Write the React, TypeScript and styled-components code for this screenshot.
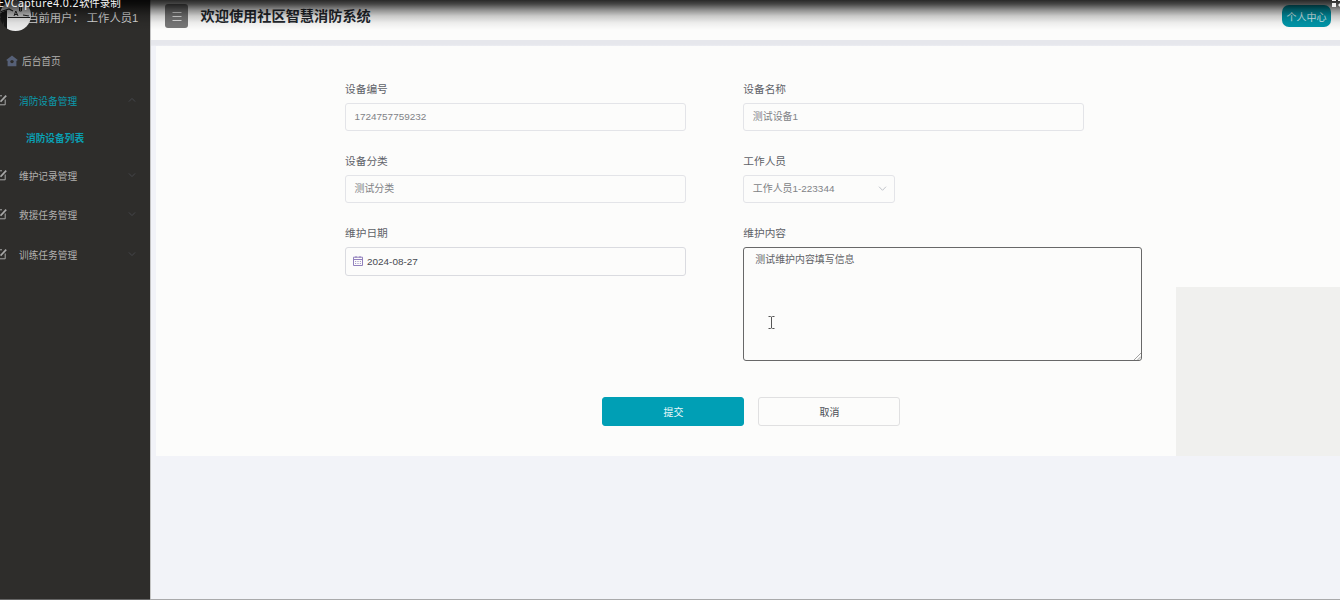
import React from "react";
import styled, { createGlobalStyle, css } from "styled-components";

const GlobalStyle = createGlobalStyle`
  * { box-sizing: border-box; }
  html, body { margin: 0; padding: 0; }
  body {
    width: 1340px;
    height: 600px;
    overflow: hidden;
    font-family: "Liberation Sans", "Noto Sans CJK SC", sans-serif;
    font-size: 10px;
    color: #5c5f66;
  }
`;

const Page = styled.div`
  position: relative;
  display: flex;
  width: 1340px;
  height: 600px;
  overflow: hidden;
  background: #f2f3f8;
`;

const Sidebar = styled.aside`
  flex: none;
  width: 151px;
  height: 600px;
  background: #2e2d2b;
  border-right: 1px solid #c4c4c4;
  overflow: hidden;
`;

const UserRow = styled.div`
  display: flex;
  height: 41px;
  color: #dcdcdc;
  font-size: 11.3px;
  line-height: 16px;
  white-space: pre;
`;

const Avatar = styled.svg`
  flex: none;
  width: 32px;
  height: 32px;
`;

const UserName = styled.span`
  margin: 9.5px 0 0 -4.8px;
`;

const MenuItem = styled.div<{ $active?: boolean }>`
  display: flex;
  align-items: center;
  height: 39.7px;
  padding: 0 14px 0 0;
  font-size: 9.7px;
  color: ${(p) => (p.$active ? "#0a9bad" : "#b2b1af")};
`;

const HomeItem = styled(MenuItem)`
  padding-left: 6px;
  gap: 4px;
`;

const SubItem = styled.div`
  display: flex;
  align-items: center;
  height: 35.5px;
  padding-left: 26px;
  font-size: 9.7px;
  font-weight: 700;
  color: #0a9fb2;
`;

const EditIcon = styled.svg`
  flex: none;
  width: 12px;
  height: 12px;
  margin: 0 12px 2px -5px;
  fill: none;
  stroke: #a9a9a9;
`;

const MenuLabel = styled.span`
  flex: 1;
`;

const Chevron = styled.svg<{ $up?: boolean }>`
  flex: none;
  width: 8px;
  height: 6px;
  fill: none;
  stroke: currentColor;
  color: #484b50;
  transform: translateY(-1px) ${(p) => (p.$up ? "rotate(180deg)" : "")};
`;

const SelectChevron = styled(Chevron)`
  color: #c0c3c9;
  width: 9px;
  height: 7px;
  transform: none;
`;

const Main = styled.main`
  flex: 1;
  display: flex;
  flex-direction: column;
  min-width: 0;
`;

const Header = styled.header`
  flex: none;
  display: flex;
  align-items: flex-start;
  height: 40px;
  padding: 4px 9px 0 14px;
  background: #fcfcfb;
`;

const MenuButton = styled.button`
  display: flex;
  align-items: center;
  justify-content: center;
  width: 23px;
  height: 24px;
  padding: 0;
  border: 0;
  border-radius: 3px;
  background: #777;
`;

const Title = styled.h1`
  flex: 1;
  margin: 2px 0 0 12.5px;
  font-size: 14.2px;
  line-height: 20px;
  font-weight: 700;
  color: #23272d;
`;

const ProfileButton = styled.button`
  width: 49px;
  height: 22px;
  margin-top: 1px;
  padding: 0;
  border: 0;
  border-radius: 7px;
  background: #0097aa;
  color: #d8f2f4;
  font: inherit;
  font-size: 10px;
  white-space: nowrap;
`;

const HeaderShade = styled.div`
  flex: none;
  height: 6px;
  background: linear-gradient(#e6e7ec 0 70%, #ecedf2);
`;

const Panel = styled.section`
  display: flex;
  flex: none;
  height: 410px;
  margin-left: 5px;
  background: #fcfcfb;
`;

const Form = styled.form`
  display: flex;
  flex-direction: column;
  width: 1020px;
  padding: 34.8px 0 0 189px;
`;

const Fields = styled.div`
  display: grid;
  grid-template-columns: 398.3px 398.5px;
  grid-template-rows: 72.2px 72.2px 172.2px;
`;

const Field = styled.div`
  display: flex;
  flex-direction: column;
`;

const Label = styled.label`
  height: 22px;
  font-size: 10.7px;
  line-height: 16px;
  color: #5e6168;
`;

const box = css`
  display: flex;
  align-items: center;
  height: 28.4px;
  padding-bottom: 0.5px;
  border: 1px solid #e3e4e8;
  border-radius: 3px;
  font-size: 9.94px;
  line-height: 15px;
  color: #808286;
`;

const Input = styled.div`
  ${box}
  width: 341px;
  padding-left: 8.5px;
`;

const DateInput = styled(Input)`
  gap: 4px;
  padding-left: 7px;
  padding-bottom: 0;
  border-color: #dadbe0;
  color: #464950;
`;

const Select = styled.div`
  ${box}
  justify-content: space-between;
  width: 152px;
  padding-left: 8.5px;
  padding-right: 7.5px;
`;

const TextArea = styled.textarea`
  display: block;
  width: 100%;
  height: 114px;
  padding: 4px 11px;
  border: 1.4px solid #686868;
  border-radius: 3px;
  outline: none;
  resize: none;
  background: transparent;
  font: inherit;
  font-size: 9.94px;
  line-height: 15px;
  color: #606266;
`;

const TextAreaWrap = styled.div`
  position: relative;
  width: 398.5px;
  height: 114px;
`;

const Grip = styled.svg`
  position: absolute;
  right: 1px;
  bottom: 1px;
  width: 7px;
  height: 7px;
  stroke: #8a8a8a;
  stroke-width: 0.8;
`;

const TextCursor = styled.svg`
  position: absolute;
  left: 25px;
  top: 69px;
  width: 7px;
  height: 13px;
  fill: none;
  stroke: #555;
`;

const Actions = styled.div`
  display: flex;
  gap: 14px;
  margin-left: 257.4px;
`;

const Button = styled.button<{ $primary?: boolean }>`
  width: 142px;
  height: 28.5px;
  padding: 0;
  border: 1px solid ${(p) => (p.$primary ? "#009fb5" : "#e0e0e1")};
  border-radius: 3px;
  background: ${(p) => (p.$primary ? "#009fb5" : "#fcfcfb")};
  color: ${(p) => (p.$primary ? "#e8f8fa" : "#4b4e55")};
  font: inherit;
  font-size: 9.94px;
`;

const Aside = styled.div`
  flex: 1;
  align-self: flex-end;
  height: 169px;
  background: #f0f0ee;
`;

const TopFade = styled.div`
  position: absolute;
  inset: 0 0 auto 0;
  height: 30px;
  pointer-events: none;
  background: linear-gradient(
    rgba(0, 0, 0, 0.84) 0,
    rgba(0, 0, 0, 0.72) 4px,
    rgba(0, 0, 0, 0.43) 10px,
    rgba(0, 0, 0, 0.2) 16px,
    rgba(0, 0, 0, 0.06) 23px,
    rgba(0, 0, 0, 0) 30px
  );
`;

const Watermark = styled.div`
  position: absolute;
  left: -2px;
  top: -5px;
  font-family: "Noto Sans", "Noto Sans CJK SC", sans-serif;
  font-size: 10.5px;
  line-height: 16px;
  color: #f4f4f4;
  white-space: nowrap;
`;

const Version = styled.span`
  letter-spacing: 0.42px;
`;

const CornerIcon = styled.svg`
  position: absolute;
  right: 0;
  top: 0;
  width: 9px;
  height: 8px;
  fill: #f1f1f1;
`;

const BottomEdge = styled.div`
  position: absolute;
  inset: auto 0 0 0;
  height: 1px;
  background: #a9a9ab;
`;

const BottomEdgeDark = styled(BottomEdge)`
  right: auto;
  width: 150px;
  background: #666;
`;

const managementMenus = ["维护记录管理", "救援任务管理", "训练任务管理"];

function ChevronPath() {
  return <path d="M1 1.2 4.5 4.8 8 1.2" />;
}

function Edit() {
  return (
    <EditIcon viewBox="0 0 12 12">
      <path d="M7 1.8H1.2v9h9V5.5" />
      <path d="M5.5 7.6 11.2 1.6" strokeWidth="1.7" />
    </EditIcon>
  );
}

export default function App() {
  return (
    <Page>
      <GlobalStyle />
      <Sidebar>
        <UserRow>
          <Avatar viewBox="0 0 32 32">
            <defs>
              <clipPath id="avatar">
                <circle cx="15.5" cy="15.5" r="15.5" />
              </clipPath>
            </defs>
            <g clipPath="url(#avatar)">
              <path fill="#d0d0d0" d="M0 0h32v18H0z" />
              <path fill="#ededed" d="M7 18h25v14H7z" />
              <path fill="#171717" d="M0 13 7 10v22H4V21l-2 5H0z" />
              <path d="M0 12 9 9 13 11M8 17.5h22M23 15l6 1" stroke="#222" strokeWidth="1.2" fill="none" />
              <path d="M14 16l1.8-5 2.2 5M14.6 14.5h2.8M19.5 7h2v4h-2zM19.5 9h2" stroke="#222" strokeWidth="1" fill="none" />
            </g>
          </Avatar>
          <UserName>当前用户： 工作人员1</UserName>
        </UserRow>
        <HomeItem>
          <svg width="12" height="12" viewBox="0 0 12 12">
            <path fill="#566077" d="M6 .5 11.8 5 10.4 6v5.2H1.6V6L.2 5z" />
            <circle cx="6" cy="6.6" r="1.7" fill="#2e2d2b" />
          </svg>
          后台首页
        </HomeItem>
        <MenuItem $active>
          <Edit />
          <MenuLabel>消防设备管理</MenuLabel>
          <Chevron $up viewBox="0 0 9 6"><ChevronPath /></Chevron>
        </MenuItem>
        <SubItem>消防设备列表</SubItem>
        {managementMenus.map((name) => (
          <MenuItem key={name}>
            <Edit />
            <MenuLabel>{name}</MenuLabel>
            <Chevron viewBox="0 0 9 6"><ChevronPath /></Chevron>
          </MenuItem>
        ))}
      </Sidebar>
      <Main>
        <Header>
          <MenuButton type="button">
            <svg width="10" height="10" viewBox="0 0 10 10" stroke="#e4e4e4">
              <path d="M.5 1.5h9M.5 5.5h9M.5 9.5h9" />
            </svg>
          </MenuButton>
          <Title>欢迎使用社区智慧消防系统</Title>
          <ProfileButton type="button">个人中心</ProfileButton>
        </Header>
        <HeaderShade />
        <Panel>
          <Form>
            <Fields>
              <Field>
                <Label>设备编号</Label>
                <Input>1724757759232</Input>
              </Field>
              <Field>
                <Label>设备名称</Label>
                <Input>测试设备1</Input>
              </Field>
              <Field>
                <Label>设备分类</Label>
                <Input>测试分类</Input>
              </Field>
              <Field>
                <Label>工作人员</Label>
                <Select>
                  工作人员1-223344
                  <SelectChevron viewBox="0 0 9 6"><ChevronPath /></SelectChevron>
                </Select>
              </Field>
              <Field>
                <Label>维护日期</Label>
                <DateInput>
                  <svg width="10" height="10" viewBox="0 0 10 10" fill="none" stroke="#9180bd">
                    <path d="M.5 1.2h9v8.3h-9zM.5 3.5h9M3 0v2M7 0v2" />
                    <path d="M2 5.5h6M2 7.5h6" strokeDasharray="1.2 1.2" strokeWidth=".8" />
                  </svg>
                  2024-08-27
                </DateInput>
              </Field>
              <Field>
                <Label>维护内容</Label>
                <TextAreaWrap>
                  <TextArea defaultValue="测试维护内容填写信息" />
                  <Grip viewBox="0 0 7 7"><path d="M0 7 7 0M3.5 7 7 3.5" /></Grip>
                  <TextCursor viewBox="0 0 7 13">
                    <path d="M.5.5h2l1 .6 1-.6h2M3.5 1v11M.5 12.5h2l1-.6 1 .6h2" />
                  </TextCursor>
                </TextAreaWrap>
              </Field>
            </Fields>
            <Actions>
              <Button type="button" $primary>提交</Button>
              <Button type="button">取消</Button>
            </Actions>
          </Form>
          <Aside />
        </Panel>
      </Main>
      <TopFade />
      <Watermark><Version>EVCapture4.0.2</Version>软件录制</Watermark>
      <CornerIcon viewBox="0 0 9 8">
        <path d="M1 0h4v1H1zM1 3h4v4H1zM7 0h2v1H7zM9 3v4L7 5z" />
      </CornerIcon>
      <BottomEdge />
      <BottomEdgeDark />
    </Page>
  );
}
